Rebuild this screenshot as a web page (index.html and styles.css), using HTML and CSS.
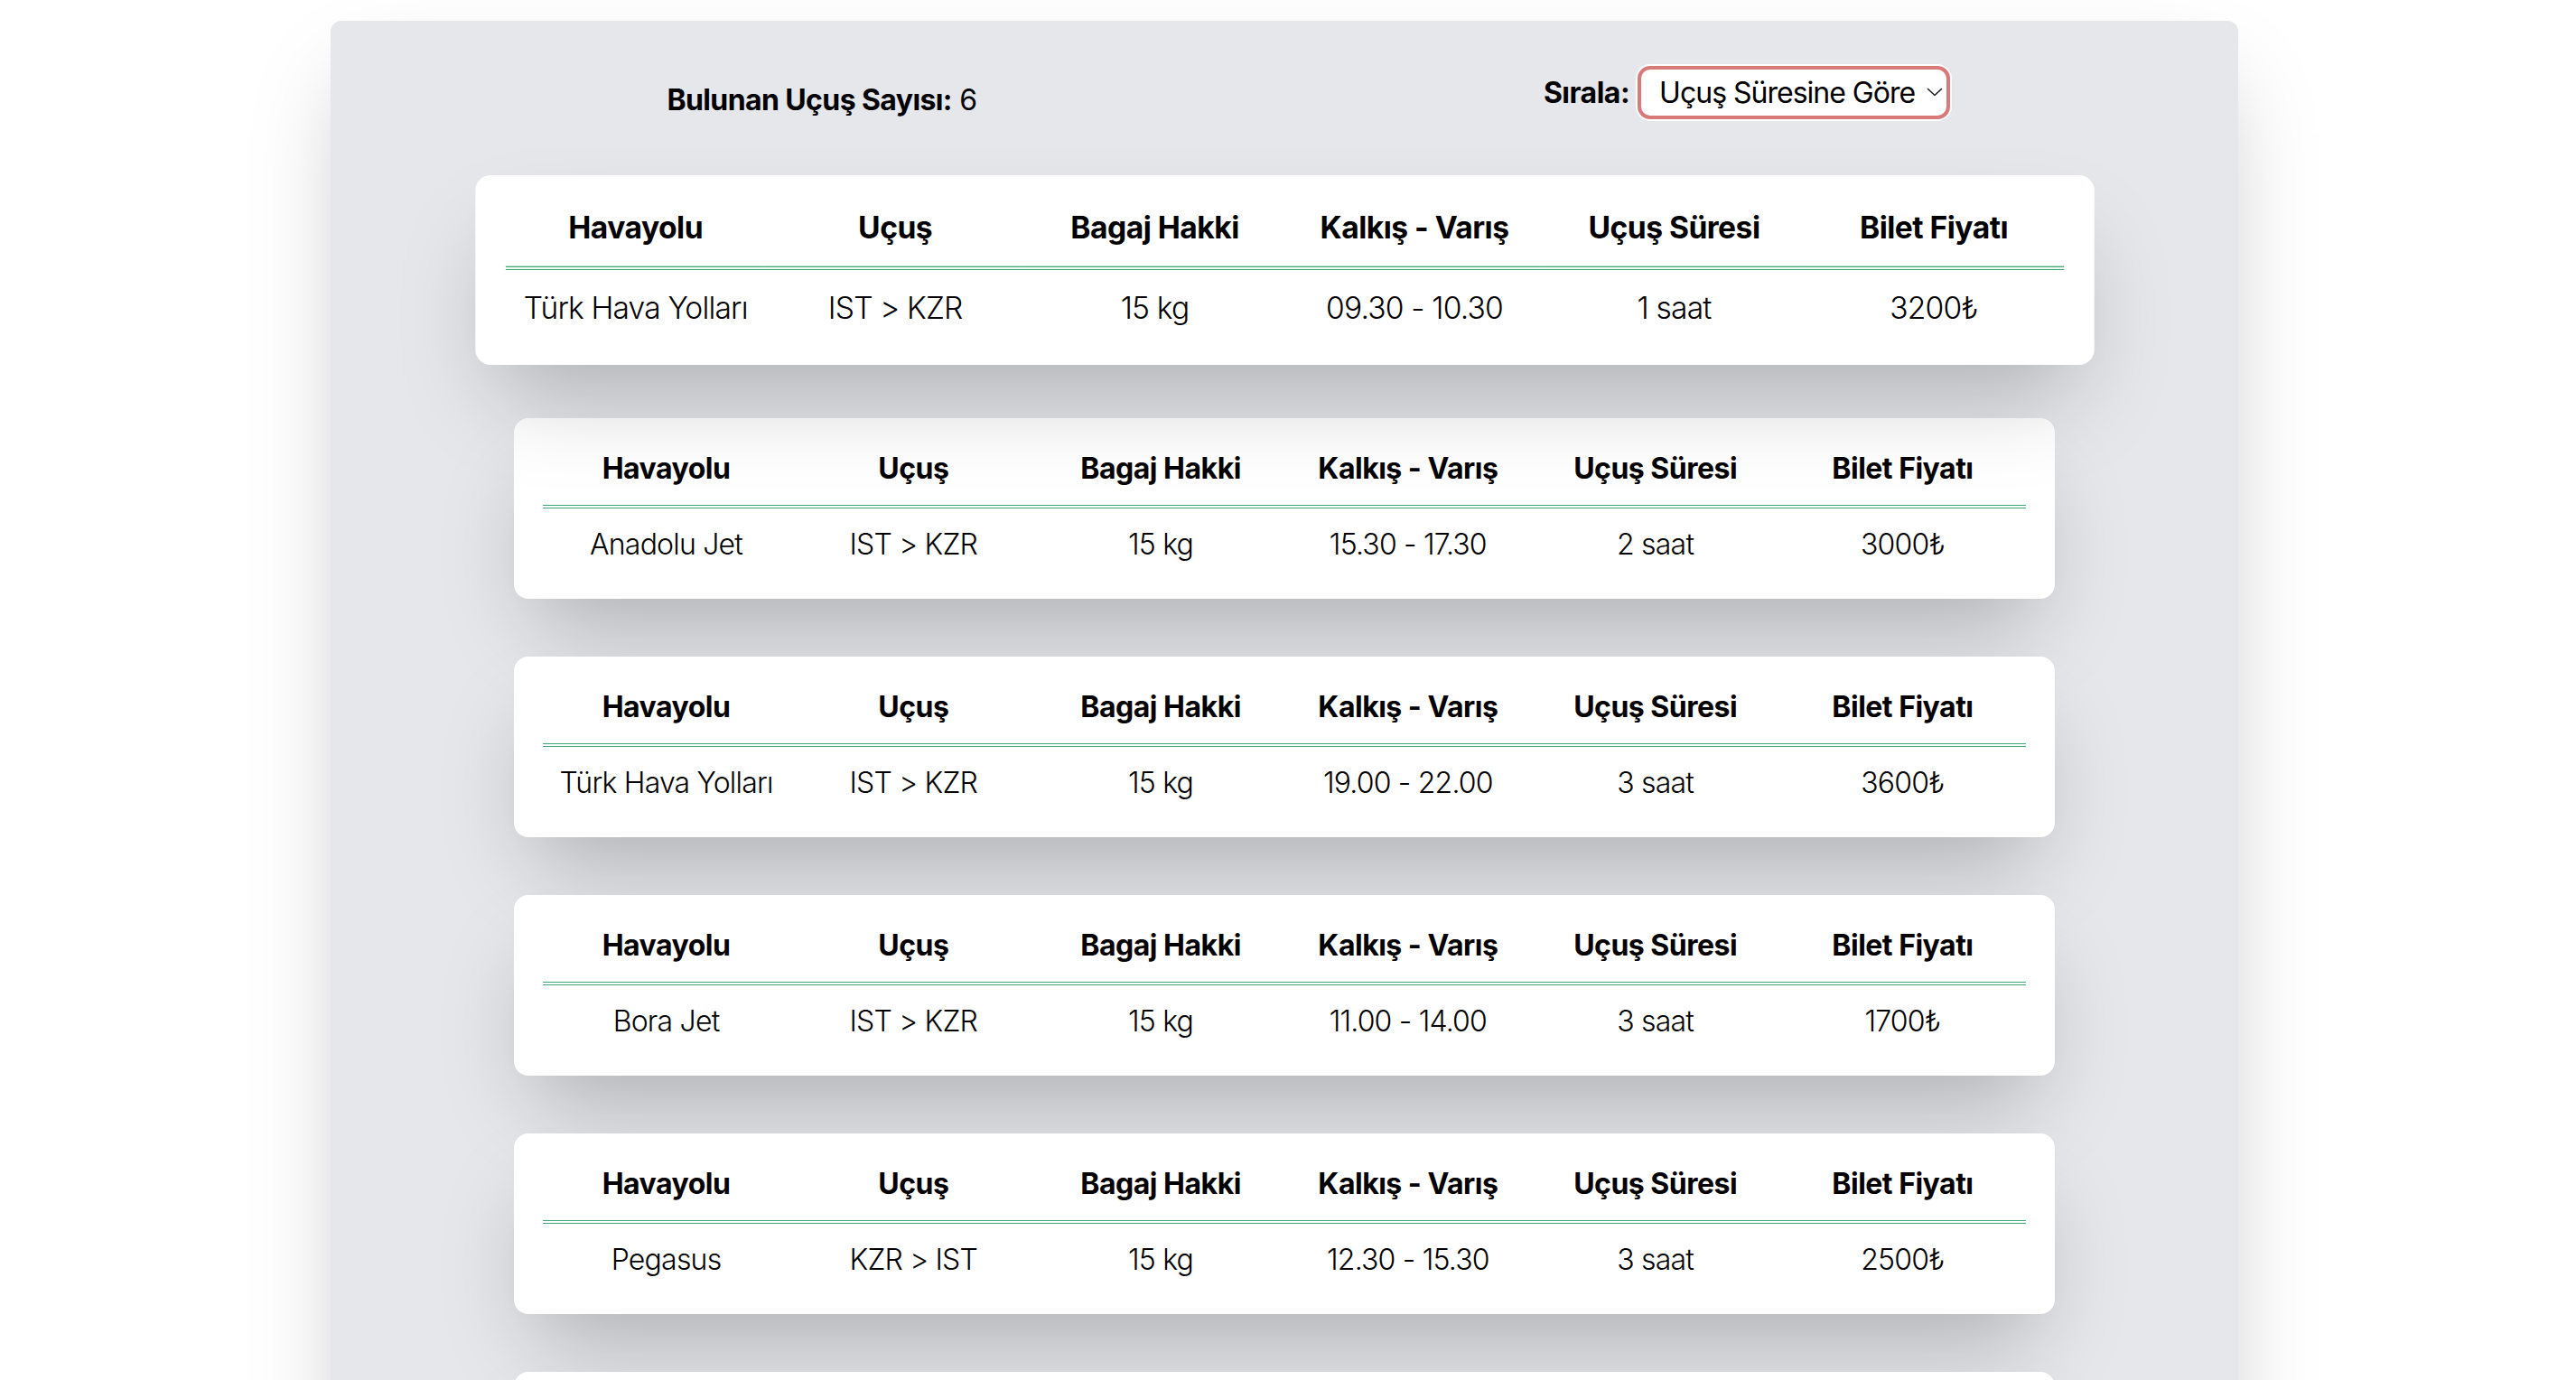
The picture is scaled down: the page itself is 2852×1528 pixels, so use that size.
FILE: index.html
```html
<!DOCTYPE html>
<html lang="tr">
<head>
<meta charset="utf-8">
<title>Uçuşlar</title>
<link rel="stylesheet" href="styles.css">
</head>
<body>
<main class="results">
  <header class="results__header">
    <p class="results__count"><strong>Bulunan Uçuş Sayısı:</strong> 6</p>
    <div class="sort">
      <label class="sort__label" for="sort">Sırala:</label>
      <div class="sort__select-wrap">
        <select class="sort__select" id="sort">
          <option>Uçuş Süresine Göre</option>
          <option>Fiyata Göre</option>
        </select>
        <svg class="sort__chevron" width="18" height="10" viewBox="0 0 18 10" aria-hidden="true">
          <polyline points="1.5,1.5 9,8.5 16.5,1.5" fill="none" stroke="#222" stroke-width="1.6" stroke-linecap="round" stroke-linejoin="round"/>
        </svg>
      </div>
    </div>
  </header>

  <section class="cards">
    <article class="card card--active">
      <table class="flight">
        <thead><tr><th>Havayolu</th><th>Uçuş</th><th>Bagaj Hakki</th><th>Kalkış - Varış</th><th>Uçuş Süresi</th><th>Bilet Fiyatı</th></tr></thead>
        <tbody><tr><td>Türk Hava Yolları</td><td>IST &gt; KZR</td><td>15 kg</td><td>09.30 - 10.30</td><td>1 saat</td><td>3200₺</td></tr></tbody>
      </table>
    </article>
    <article class="card">
      <table class="flight">
        <thead><tr><th>Havayolu</th><th>Uçuş</th><th>Bagaj Hakki</th><th>Kalkış - Varış</th><th>Uçuş Süresi</th><th>Bilet Fiyatı</th></tr></thead>
        <tbody><tr><td>Anadolu Jet</td><td>IST &gt; KZR</td><td>15 kg</td><td>15.30 - 17.30</td><td>2 saat</td><td>3000₺</td></tr></tbody>
      </table>
    </article>
    <article class="card">
      <table class="flight">
        <thead><tr><th>Havayolu</th><th>Uçuş</th><th>Bagaj Hakki</th><th>Kalkış - Varış</th><th>Uçuş Süresi</th><th>Bilet Fiyatı</th></tr></thead>
        <tbody><tr><td>Türk Hava Yolları</td><td>IST &gt; KZR</td><td>15 kg</td><td>19.00 - 22.00</td><td>3 saat</td><td>3600₺</td></tr></tbody>
      </table>
    </article>
    <article class="card">
      <table class="flight">
        <thead><tr><th>Havayolu</th><th>Uçuş</th><th>Bagaj Hakki</th><th>Kalkış - Varış</th><th>Uçuş Süresi</th><th>Bilet Fiyatı</th></tr></thead>
        <tbody><tr><td>Bora Jet</td><td>IST &gt; KZR</td><td>15 kg</td><td>11.00 - 14.00</td><td>3 saat</td><td>1700₺</td></tr></tbody>
      </table>
    </article>
    <article class="card">
      <table class="flight">
        <thead><tr><th>Havayolu</th><th>Uçuş</th><th>Bagaj Hakki</th><th>Kalkış - Varış</th><th>Uçuş Süresi</th><th>Bilet Fiyatı</th></tr></thead>
        <tbody><tr><td>Pegasus</td><td>KZR &gt; IST</td><td>15 kg</td><td>12.30 - 15.30</td><td>3 saat</td><td>2500₺</td></tr></tbody>
      </table>
    </article>
    <article class="card">
      <table class="flight">
        <thead><tr><th>Havayolu</th><th>Uçuş</th><th>Bagaj Hakki</th><th>Kalkış - Varış</th><th>Uçuş Süresi</th><th>Bilet Fiyatı</th></tr></thead>
        <tbody><tr><td>Türk Hava Yolları</td><td>KZR &gt; IST</td><td>15 kg</td><td>20.00 - 23.00</td><td>3 saat</td><td>3400₺</td></tr></tbody>
      </table>
    </article>
  </section>
</main>
</body>
</html>
```

FILE: styles.css
```css
html, body {
  margin: 0;
  padding: 0;
  background: #ffffff;
  overflow: hidden;
}

body {
  font-family: Inter, "Noto Sans", "DejaVu Sans", sans-serif;
  color: #000;
}

.results {
  box-sizing: border-box;
  width: 2112px;
  margin: 23px 0 0 366px;
  padding: 32px;
  background: #e5e7eb;
  border-radius: 12px;
  box-shadow: 0 50px 100px -24px rgba(0, 0, 0, 0.25);
}

.results__header {
  display: grid;
  grid-template-columns: 1fr 1fr;
  justify-items: center;
  align-items: end;
  padding: 18px 0 16px;
}

.results__count {
  margin: 0;
  font-size: 32px;
  line-height: 42px;
  font-weight: 400;
  letter-spacing: -0.6px;
}

.results__count strong {
  font-weight: 700;
}

.sort {
  display: flex;
  align-items: center;
  gap: 9px;
  align-self: end;
}

.sort__label {
  font-size: 32px;
  font-weight: 700;
  letter-spacing: -0.5px;
}

.sort__select-wrap {
  position: relative;
  display: flex;
}

.sort__select {
  appearance: none;
  -webkit-appearance: none;
  box-sizing: border-box;
  width: 346px;
  height: 59px;
  padding: 0 26px 0 20px;
  font-family: inherit;
  font-size: 32px;
  font-weight: 400;
  letter-spacing: -1px;
  color: #000;
  background: #fff;
  border: 4px solid #d97a7a;
  border-radius: 14px;
  box-shadow: 0 0 0 2px #ffffff;
  outline: none;
}

.sort__chevron {
  position: absolute;
  right: 8px;
  top: 24px;
  pointer-events: none;
}

.cards {
  display: flex;
  flex-direction: column;
  align-items: center;
  gap: 64px;
  margin-top: 51px;
}

.card {
  box-sizing: border-box;
  width: calc(100% * 5 / 6);
  padding: 32px;
  background: #fff;
  border-radius: 16px;
  box-shadow: 0 50px 100px -24px rgba(0, 0, 0, 0.25);
}

.card--active {
  transform: scale(1.05);
}

.flight {
  width: 100%;
  table-layout: fixed;
  border-collapse: collapse;
}

.flight thead tr {
  border-bottom: 4px double #3fa874;
}

.flight th {
  padding: 0 0 16px;
  font-size: 32px;
  line-height: 48px;
  font-weight: 700;
  letter-spacing: -0.5px;
  text-align: center;
}

.flight td {
  padding: 16px 0 4px;
  font-size: 32px;
  line-height: 48px;
  font-weight: 300;
  letter-spacing: -0.8px;
  text-align: center;
  white-space: nowrap;
}
```
